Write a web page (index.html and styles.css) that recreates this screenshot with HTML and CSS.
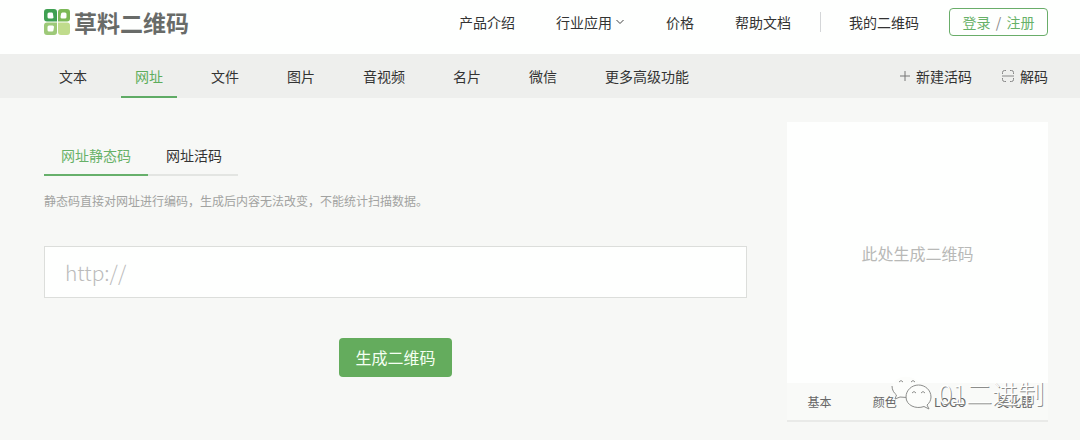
FILE: index.html
```html
<!DOCTYPE html>
<html lang="zh-CN">
<head>
<meta charset="utf-8">
<meta name="viewport" content="width=device-width, initial-scale=1">
<title>草料二维码</title>
<link rel="stylesheet" href="styles.css">
</head>
<body>
<header class="site-header">
  <a class="brand" href="#">
    <svg class="brand-mark" viewBox="0 0 26 26" aria-hidden="true">
      <path fill="#3fa052" fill-rule="evenodd" d="M3 0h7q3 0 3 3v9.400H3q-3 0-3-3V3q0-3 3-3zM5 3.500q-1.500 0-1.500 1.500v3q0 1.500 1.500 1.500h3q1.500 0 1.500-1L9 5q0-1.500-1-1.500z"/>
      <path fill="#7cb957" fill-rule="evenodd" d="M17 0h6q3 0 3 3v6.400q0 3-3 3h-9V3q0-3 3-3zM18.500 3.500q-1.500 0-1.500 1.500L16.500 8q0 1.500 1.500 1.500h3q1.500 0 1.500-1.500V5q0-1.500-1.500-1.500z"/>
      <path fill="#9dc978" fill-rule="evenodd" d="M3 13.600h10V23q0 3-3 3H3q-3 0-3-3v-6.400q0-3 3-3zM5 16.500q-1.500 0-1.500 1.500v3q0 1.500 1.500 1.500h3q1.500 0 1.500-1.500l.5-3q0-1.500-1.500-1.500z"/>
      <path fill="#c0dc8c" d="M14 13.600h9q3 0 3 3V23q0 3-3 3h-6q-3 0-3-3z"/>
    </svg>
    <span>草料二维码</span>
  </a>
  <nav class="main-nav">
    <a href="#">产品介绍</a>
    <a class="has-menu" href="#">行业应用<svg class="chevron" viewBox="0 0 10 6" aria-hidden="true"><path d="M1.500 1 5 4.500 8.500 1"/></svg></a>
    <a href="#">价格</a>
    <a href="#">帮助文档</a>
  </nav>
  <div class="account">
    <a class="my-codes" href="#">我的二维码</a>
    <button class="login" type="button">登录 <span class="slash">/</span> 注册</button>
  </div>
</header>

<div class="type-bar">
  <nav class="type-tabs">
    <a href="#">文本</a>
    <a class="active" href="#">网址</a>
    <a href="#">文件</a>
    <a href="#">图片</a>
    <a href="#">音视频</a>
    <a href="#">名片</a>
    <a href="#">微信</a>
    <a href="#">更多高级功能</a>
  </nav>
  <div class="quick-links">
    <a href="#"><svg class="icon-plus" viewBox="0 0 10 10" aria-hidden="true"><path d="M5 0v10M0 5h10"/></svg>新建活码</a>
    <a href="#"><svg class="icon-scan" viewBox="0 0 12 12" aria-hidden="true"><path d="M.5 4V2.500q0-2 2-2H4M8 .5h1.500q2 0 2 2V4M.5 8v1.500q0 2 2 2H4M8 11.500h1.500q2 0 2-2V8M0 6h12"/></svg>解码</a>
  </div>
</div>

<main class="workspace">
  <section class="editor">
    <div class="mode-tabs">
      <button class="active" type="button">网址静态码</button>
      <button type="button">网址活码</button>
    </div>
    <p class="hint">静态码直接对网址进行编码，生成后内容无法改变，不能统计扫描数据。</p>
    <input class="url-input" type="text" placeholder="http://" aria-label="网址">
    <button class="generate" type="button">生成二维码</button>
  </section>
  <aside class="preview">
    <div class="preview-box">此处生成二维码</div>
    <div class="style-tabs">
      <button type="button">基本</button>
      <button type="button">颜色</button>
      <button type="button">LOGO</button>
      <button type="button">美化器</button>
    </div>
    <div class="watermark">
      <svg class="wechat" viewBox="0 0 42 34" aria-hidden="true">
        <path class="bubble" d="M16 21.500c-2 .5-5 .3-7-.5L4 23l1.500-4C-1 13 1 3 12 1c9-1.500 16 3 17 9"/>
        <path class="edge" d="M1 10c0 4 2 7 4.500 9L4 23l5-2 7 .5"/>
        <path class="bubble edge" d="M36 29l2 4-5-2.500c-8 3-18-1-18-9.500 0-7 6-12 12.500-12S40 14 40 21c0 3-1.500 6-4 8z"/>
        <path class="edge" d="M8 6q2-3 4 0M20 6q2-3 4 0M21 17q2-3 4 0M30 17q2-3 4 0"/>
      </svg>
      <span>01二进制</span>
    </div>
  </aside>
</main>
</body>
</html>
```
FILE: styles.css
```css
* {
  box-sizing: border-box;
}

body {
  margin: 0;
  min-height: 100vh;
  background: #f7f8f6;
  color: #333;
  font: 14px/20px "Noto Sans CJK SC", sans-serif;
}

a {
  color: inherit;
  text-decoration: none;
}

button,
input {
  font: inherit;
}

button {
  padding: 0;
  border: 0;
  background: none;
  color: inherit;
  cursor: pointer;
}

svg {
  fill: none;
  stroke-width: 1;
}

.site-header {
  display: flex;
  align-items: center;
  height: 54px;
  padding: 0 32px 10px 44px;
  background: #fefffe;
}

.brand {
  display: flex;
  align-items: center;
  gap: 4px;
  color: #686b68;
  font-size: 23px;
  font-weight: 700;
  line-height: 28px;
}

.brand-mark {
  width: 26px;
  height: 26px;
}

.main-nav {
  display: flex;
  gap: 41px;
  margin-left: auto;
  padding-right: 29px;
  border-right: 1px solid #d4d6d8;
}

.has-menu {
  display: flex;
  align-items: center;
  gap: 3px;
}

.chevron {
  width: 10px;
  height: 6px;
  stroke: #444;
}

.account {
  display: flex;
  align-items: center;
  gap: 30px;
  margin-left: 28px;
}

.login {
  width: 99px;
  height: 28px;
  border: 1px solid #69ad69;
  border-radius: 4px;
  color: #67b168;
}

.slash {
  margin: 0 2px;
  color: #888;
}

.type-bar {
  display: flex;
  justify-content: space-between;
  height: 44px;
  padding: 0 32px 0 45px;
  background: #eeefed;
}

.type-tabs {
  display: flex;
  gap: 20px;
}

.type-tabs a {
  padding: 12px 14px 10px;
  border-bottom: 2px solid transparent;
}

.type-tabs .active {
  border-color: #5fab65;
  color: #5dad5c;
}

.quick-links {
  display: flex;
  align-items: center;
  gap: 30px;
}

.quick-links a {
  display: flex;
  align-items: center;
  gap: 6px;
}

.icon-plus {
  width: 10px;
  height: 10px;
  stroke: #777;
}

.icon-scan {
  width: 12px;
  height: 12px;
  stroke: #888;
}

.workspace {
  display: grid;
  grid-template-columns: 1fr 261px;
  gap: 40px;
  padding: 24px 32px 18px 44px;
}

.editor {
  display: flex;
  flex-direction: column;
  align-items: flex-start;
  padding-top: 15px;
}

.mode-tabs {
  display: flex;
}

.mode-tabs button {
  padding: 8px 16px 9px 18px;
  border-bottom: 2px solid #e3e5e2;
}

.mode-tabs .active {
  padding: 8px 17px 9px;
  border-color: #67b06b;
  color: #67b168;
}

.hint {
  margin: 15px 0 35px;
  color: #a2a3a1;
  font-size: 12px;
}

.url-input {
  width: 100%;
  height: 52px;
  padding: 0 20px;
  border: 1px solid #dcdedb;
  border-radius: 0;
  background: #fefffe;
  color: #333;
  font-size: 21px;
  font-weight: 300;
}

.url-input::placeholder {
  color: #bbb;
}

.generate {
  align-self: center;
  margin-top: 40px;
  padding: 9px 16px 10px;
  border-radius: 4px;
  background: #64ac5d;
  color: #f4fff2;
  font-size: 16px;
}

.preview {
  position: relative;
}

.preview-box {
  display: grid;
  place-items: center;
  aspect-ratio: 1;
  background: #fefffe;
  color: #b8b9b7;
  font-size: 16px;
}

.style-tabs {
  display: grid;
  grid-template-columns: repeat(4, 1fr);
  height: 39px;
  border-bottom: 2px solid #e9eae8;
  background: #f9faf8;
  color: #666;
  font-size: 12px;
}

.watermark {
  position: absolute;
  right: 4px;
  bottom: 12px;
  display: flex;
  align-items: center;
  gap: 5px;
  color: #fefffe;
  font-size: 26px;
  font-weight: 300;
  line-height: 34px;
  white-space: nowrap;
  pointer-events: none;
  text-shadow: 1px 1px 0 #8c8d8b;
}

.wechat {
  width: 42px;
  height: 34px;
}

.bubble {
  fill: #fcfdfb;
}

.edge {
  stroke: #8c8d8b;
}
```
